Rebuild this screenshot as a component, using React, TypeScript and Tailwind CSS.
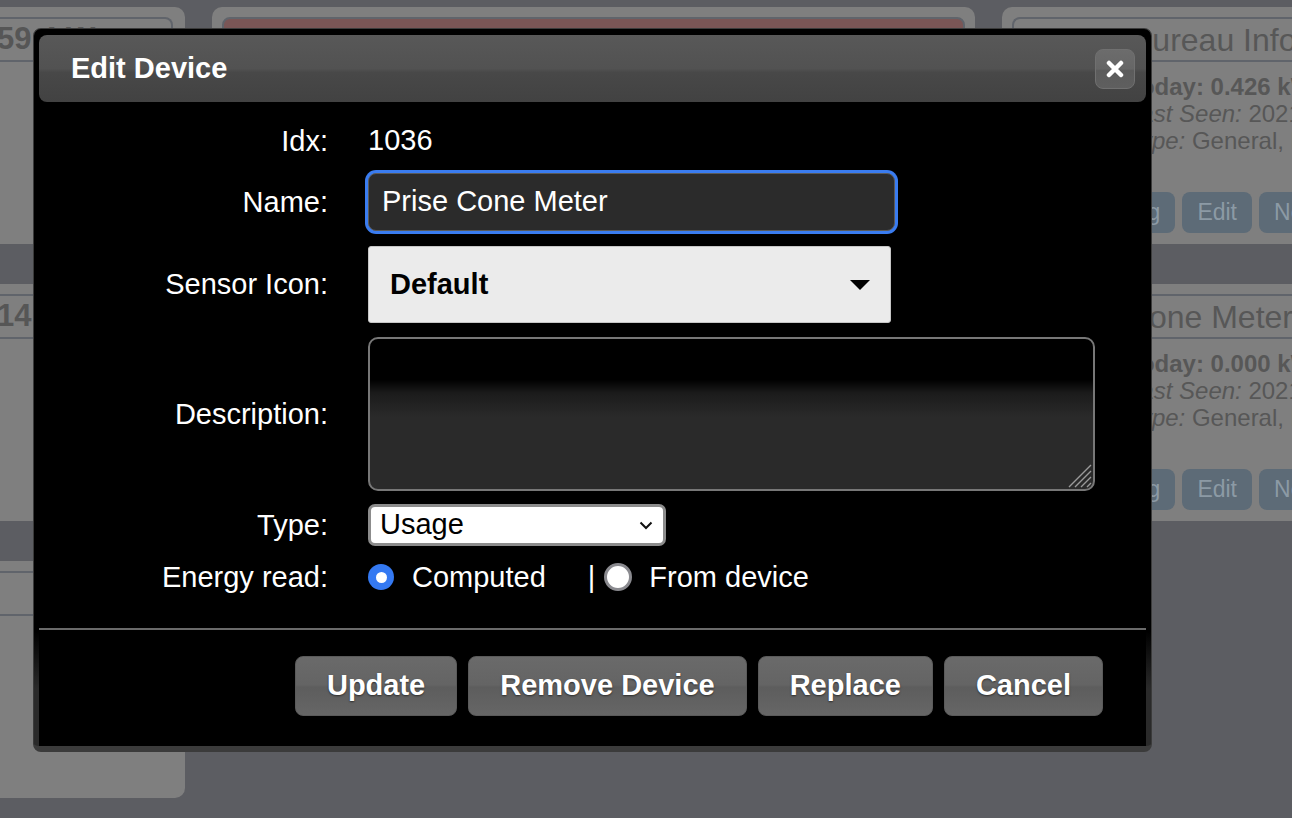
import React from "react"

function SideCard(props: { title: string }) {
  return (
    <div className="h-[237px] rounded-r-[10px] bg-[#7f7f7f] pt-[10px]">
      <div className="mr-[12px] flex h-[45px] items-center overflow-hidden whitespace-nowrap rounded-tr-[8px] border-t-2 border-r-2 border-b-2 border-[#60646b]">
        <span className="-ml-[3px] text-[31px] font-bold text-[#565656]">{props.title}</span>
      </div>
    </div>
  )
}

function MidCard() {
  return (
    <div className="h-[237px] rounded-[10px] bg-[#7f7f7f] px-[10px] pt-[10px]">
      <div className="h-[45px] rounded-t-[8px] border-2 border-[#60646b] bg-[#7a5656]" />
    </div>
  )
}

function DeviceCard(props: { name: string; today: string; indent: string }) {
  return (
    <div className="h-[237px] overflow-hidden whitespace-nowrap rounded-[10px] bg-[#7f7f7f] pl-[10px] pt-[10px] text-[#575757]">
      <div className={`flex h-[45px] items-center rounded-tl-[8px] border-t-2 border-l-2 border-b-2 border-[#60646b] ${props.indent}`}>
        <span className="text-[32px] leading-none">{props.name}</span>
      </div>
      <div className="mt-[11px] pl-[115px] text-[24px] leading-[27px]">
        <div className="font-bold">Today: {props.today} kWh</div>
        <div>
          <i>Last Seen:</i> 2021-03-14 18:42:07
        </div>
        <div>
          <i>Type:</i> General, kWh
        </div>
      </div>
      <div className="mt-[38px] flex gap-[7px] pl-[95px]">
        {["Log", "Edit", "Notifications"].map((b) => (
          <div key={b} className="flex h-[41px] items-center rounded-[8px] bg-[#5d6b77] px-[15px] text-[23px] text-[#8c9aa5]">
            {b}
          </div>
        ))}
      </div>
    </div>
  )
}

function Row(props: { label: string; h: string; mt: string; children: React.ReactNode }) {
  return (
    <div className={`flex items-center ${props.h} ${props.mt}`}>
      <div className="w-[289px] shrink-0 text-right text-[29px] leading-none text-white">{props.label}</div>
      <div className="ml-[40px] flex items-center">{props.children}</div>
    </div>
  )
}

function Btn(props: { label: string }) {
  return (
    <button className="h-[60px] rounded-[8px] border border-[#5a5a5a] bg-[linear-gradient(to_bottom,#6a6a6a_0%,#646464_48%,#5d5d5d_52%,#666666_100%)] px-[31px] text-[29px] font-bold text-white [text-shadow:0_1px_2px_rgba(0,0,0,0.55)]">
      {props.label}
    </button>
  )
}

function EditDeviceDialog() {
  return (
    <div className="absolute left-[33px] top-[28px] w-[1119px] rounded-[8px] border border-b-[6px] border-[#3b3b3b] bg-[linear-gradient(to_bottom,#000_0%,#000_84%,#2a2a2a_92%,#2a2a2a_100%)] px-[5px] pt-[6px]">
      <div className="flex h-[67px] items-center justify-between rounded-[8px] bg-[linear-gradient(to_bottom,#585858_0%,#525252_50%,#484848_56%,#424242_100%)] pl-[32px] pr-[11px]">
        <span className="text-[29px] font-bold text-white">Edit Device</span>
        <button className="flex h-[40px] w-[40px] items-center justify-center rounded-[8px] border border-[#707070] bg-[linear-gradient(to_bottom,#6c6c6c_0%,#666666_50%,#5b5b5b_54%,#5f5f5f_100%)]">
          <svg width="18" height="18" viewBox="0 0 18 18">
            <path d="M3 3L15 15M15 3L3 15" stroke="white" strokeWidth="4.5" strokeLinecap="round" />
          </svg>
        </button>
      </div>

      <div className="bg-black pb-[37px] pt-[22px]">
        <Row label="Idx:" h="h-[34px]" mt="mt-0">
          <span className="text-[29px] text-white">1036</span>
        </Row>
        <Row label="Name:" h="h-[58px]" mt="mt-[15px]">
          <div className="flex h-[58px] w-[527px] items-center rounded-[8px] border border-[#5a5a5a] bg-[#2b2b2b] pl-[13px] text-[29px] text-white ring-[3px] ring-[#3a7cf0]">
            Prise Cone Meter
          </div>
        </Row>
        <Row label="Sensor Icon:" h="h-[77px]" mt="mt-[15px]">
          <div className="flex h-[77px] w-[523px] items-center justify-between rounded-[3px] border border-[#c6c6c6] bg-[#ebebeb] pl-[21px] pr-[20px] text-[29px] font-bold text-black">
            Default
            <svg width="20" height="10" viewBox="0 0 20 10">
              <polygon points="0,0 20,0 10,10" fill="#000" />
            </svg>
          </div>
        </Row>
        <Row label="Description:" h="h-[154px]" mt="mt-[14px]">
          <div className="relative h-[154px] w-[727px] rounded-[10px] border-2 border-[#777] bg-[linear-gradient(to_bottom,#000_0%,#000_27%,#1b1b1b_36%,#2a2a2a_52%,#2a2a2a_100%)]">
            <svg width="26" height="26" viewBox="0 0 26 26" className="absolute bottom-[1px] right-[1px]">
              <path d="M25 3L3 25M25 9L9 25M25 15L15 25M25 21L21 25" stroke="#9a9a9a" strokeWidth="1.4" />
            </svg>
          </div>
        </Row>
        <Row label="Type:" h="h-[42px]" mt="mt-[13px]">
          <div className="flex h-[42px] w-[298px] items-center justify-between rounded-[7px] border-[3px] border-[#8c8c8c] bg-white pl-[9px] pr-[10px] text-[29px] text-black">
            Usage
            <svg width="14" height="9" viewBox="0 0 14 9">
              <path d="M1.5 1.5L7 7L12.5 1.5" stroke="#111" strokeWidth="2" fill="none" />
            </svg>
          </div>
        </Row>
        <Row label="Energy read:" h="h-[28px]" mt="mt-[17px]">
          <span className="flex h-[26px] w-[26px] items-center justify-center rounded-full bg-[#3479f2]">
            <span className="h-[11px] w-[11px] rounded-full bg-white" />
          </span>
          <span className="ml-[18px] text-[29px] leading-none text-white">Computed</span>
          <span className="ml-[42px] text-[29px] leading-none text-white">|</span>
          <span className="ml-[9px] h-[28px] w-[28px] rounded-full border-[3px] border-[#8a8a8f] bg-white" />
          <span className="ml-[17px] text-[29px] leading-none text-white">From device</span>
        </Row>
      </div>

      <div className="h-[2px] bg-[#6a6a6a]" />

      <div className="flex justify-end gap-[11px] bg-black pb-[30px] pr-[43px] pt-[26px]">
        <Btn label="Update" />
        <Btn label="Remove Device" />
        <Btn label="Replace" />
        <Btn label="Cancel" />
      </div>
    </div>
  )
}

export default function App() {
  return (
    <div className="relative h-[818px] w-[1292px] overflow-hidden bg-[#5c5d62] font-['Liberation_Sans',Arial,sans-serif]">
      <div className="flex gap-[27px] pt-[7px]">
        <div className="flex w-[185px] shrink-0 flex-col gap-[40px]">
          <SideCard title="59.4 W" />
          <SideCard title="14.2" />
          <SideCard title="" />
        </div>
        <div className="flex w-[763px] shrink-0 flex-col gap-[40px]">
          <MidCard />
          <MidCard />
        </div>
        <div className="flex w-[440px] shrink-0 flex-col gap-[40px]">
          <DeviceCard name="Bureau Info" today="0.426" indent="pl-[117px]" />
          <DeviceCard name="Prise Cone Meter" today="0.000" indent="pl-[30px]" />
        </div>
      </div>
      <EditDeviceDialog />
    </div>
  )
}
